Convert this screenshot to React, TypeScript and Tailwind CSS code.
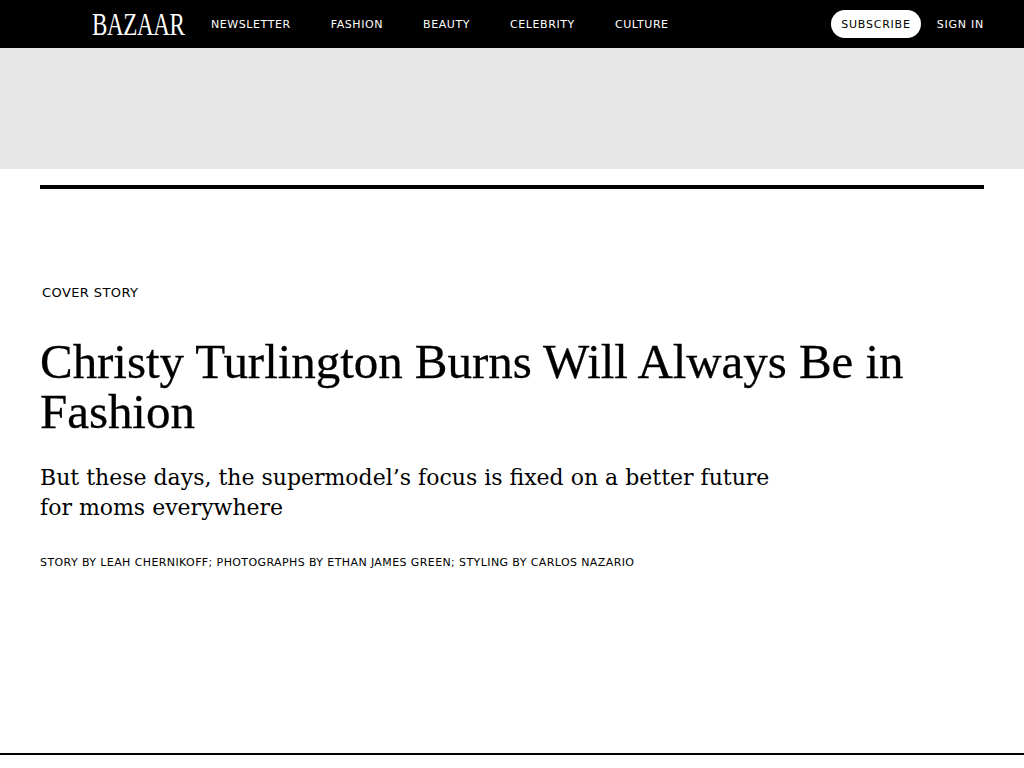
const navLinks = ["NEWSLETTER", "FASHION", "BEAUTY", "CELEBRITY", "CULTURE"];

function Header() {
  return (
    <header className="h-12 bg-black flex items-center pl-[92px] pr-10 font-['DejaVu_Sans',sans-serif] text-[11px] tracking-[0.58px]">
      <div className="w-[93px] h-12 shrink-0 flex items-center">
        <span className="block font-['Liberation_Serif',serif] text-[32px] leading-none text-white origin-left scale-x-[0.72] tracking-[-0.5px]">
          BAZAAR
        </span>
      </div>
      <nav className="flex items-center gap-10 ml-[26px] pt-0.5">
        {navLinks.map((link) => (
          <a key={link} className="text-white">
            {link}
          </a>
        ))}
      </nav>
      <div className="ml-auto flex items-center gap-4 tracking-[0.77px]">
        <a className="h-7 pt-0.5 px-2.5 rounded-full bg-white text-black flex items-center">SUBSCRIBE</a>
        <a className="pt-0.5 text-white">SIGN IN</a>
      </div>
    </header>
  );
}

export default function App() {
  return (
    <div className="min-h-[768px] bg-white overflow-hidden">
      <Header />
      <div className="h-[121px] bg-[#e7e7e7]" />
      <main className="px-10 pt-4">
        <div className="h-1 bg-black" />
        <p className="mt-[96px] ml-0.5 font-['DejaVu_Sans',sans-serif] text-[13px] leading-[16px] tracking-[0.4px] text-black">
          COVER STORY
        </p>
        <h1 className="mt-[36px] font-['Liberation_Serif',serif] text-[49px] leading-[50px] tracking-[-0.05px] [-webkit-text-stroke:0.3px_black] text-black">
          Christy Turlington Burns Will Always Be in Fashion
        </h1>
        <p className="mt-[26px] w-[760px] font-['DejaVu_Serif',serif] text-[22px] leading-[30px] text-black">
          But these days, the supermodel’s focus is fixed on a better future for moms everywhere
        </p>
        <p className="mt-[32px] font-['DejaVu_Sans',sans-serif] text-[11px] leading-[16px] tracking-[0.4px] text-black">
          STORY BY LEAH CHERNIKOFF; PHOTOGRAPHS BY ETHAN JAMES GREEN; STYLING BY CARLOS NAZARIO
        </p>
      </main>
      <div className="mt-[182px] h-0.5 bg-black" />
    </div>
  );
}
